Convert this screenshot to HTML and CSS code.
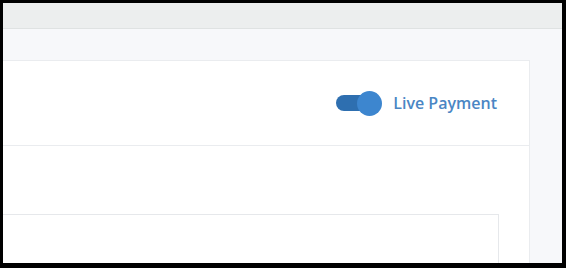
FILE: index.html
```html
<!DOCTYPE html>
<html lang="en">
<head>
    <meta charset="UTF-8">
    <meta name="viewport" content="width=device-width, initial-scale=1.0">
    <title>Payment Settings</title>
    <link rel="stylesheet" href="styles.css">
</head>
<body>
    <div class="frame">
        <div class="topbar"></div>
        <main class="content">
            <section class="card">
                <div class="card-header">
                    <label class="switch">
                        <input type="checkbox" checked>
                        <span class="track"></span>
                        <span class="knob"></span>
                    </label>
                    <span class="switch-label">Live Payment</span>
                </div>
                <div class="card-body">
                    <div class="panel"></div>
                </div>
            </section>
        </main>
    </div>
</body>
</html>
```

FILE: styles.css
```css
html, body {
    margin: 0;
    height: 100%;
}
body {
    background: #000;
    padding: 3px 4px 5px 3px;
    box-sizing: border-box;
    font-family: "Open Sans", "Noto Sans", Arial, sans-serif;
    overflow: hidden;
}
.frame {
    height: 100%;
    display: flex;
    flex-direction: column;
    background: #f7f8fa;
    overflow: hidden;
}
.topbar {
    height: 25px;
    flex: none;
    background: #eceeee;
    border-bottom: 1px solid #dfe2e2;
}
.content {
    flex: 1;
    padding: 31px 32px 0 0;
    display: flex;
    flex-direction: column;
}
.card {
    flex: 1;
    background: #fff;
    border: 1px solid #eaecef;
    border-left: none;
    border-bottom: none;
    display: flex;
    flex-direction: column;
}
.card-header {
    height: 84px;
    flex: none;
    display: flex;
    align-items: center;
    justify-content: flex-end;
    padding-right: 32px;
    border-bottom: 1px solid #eaecef;
}
.switch {
    position: relative;
    width: 46px;
    height: 25px;
    margin-right: 11px;
    margin-top: 1px;
}
.switch input {
    display: none;
}
.track {
    position: absolute;
    left: 0;
    top: 4px;
    width: 40px;
    height: 16px;
    border-radius: 8px;
    background: #2e6fb0;
}
.knob {
    position: absolute;
    right: 0;
    top: 0;
    width: 25px;
    height: 25px;
    border-radius: 50%;
    background: #3d86cf;
}
.switch-label {
    font-size: 16px;
    font-weight: 600;
    color: #4a86c4;
}
.card-body {
    flex: 1;
    padding: 68px 30px 0 0;
    display: flex;
    flex-direction: column;
}
.panel {
    flex: 1;
    border: 1px solid #e6e8eb;
    border-left: none;
    border-bottom: none;
}
```
